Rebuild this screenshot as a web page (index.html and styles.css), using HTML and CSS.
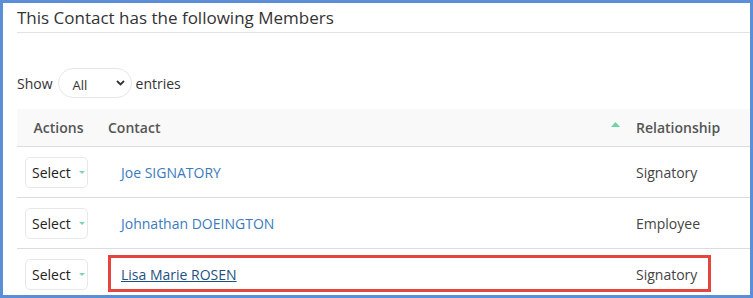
FILE: index.html
```html
<!DOCTYPE html>
<html lang="en">
<head>
  <meta charset="UTF-8" />
  <meta name="viewport" content="width=device-width, initial-scale=1" />
  <title>Contact Members</title>
  <link rel="stylesheet" href="styles.css">
</head>
<body>
  <div class="frame">
    <h2 class="title">This Contact has the following Members</h2>

    <div class="show">
      <span>Show</span>
      <div class="pill">
        <span class="pill-text">All</span>
        <svg class="chevron" width="9" height="6" viewBox="0 0 9 6">
          <path d="M1 1 L4.5 4.5 L8 1" fill="none" stroke="#333" stroke-width="1.8" />
        </svg>
      </div>
      <span>entries</span>
    </div>

    <div class="table-wrap">
      <table>
        <thead>
          <tr>
            <th class="col-actions">Actions</th>
            <th class="col-contact">
              <div class="sortable">
                <span>Contact</span>
                <svg width="9" height="5" viewBox="0 0 9 5"><path d="M0 5 L4.5 0 L9 5 Z" fill="#6fd3a5" /></svg>
              </div>
            </th>
            <th>Relationship</th>
          </tr>
        </thead>
        <tbody>
          <tr>
            <td class="col-actions"><span class="btn">Select <i class="caret"></i></span></td>
            <td><a href="#" class="contact">Joe SIGNATORY</a></td>
            <td>Signatory</td>
          </tr>
          <tr>
            <td class="col-actions"><span class="btn">Select <i class="caret"></i></span></td>
            <td><a href="#" class="contact">Johnathan DOEINGTON</a></td>
            <td>Employee</td>
          </tr>
          <tr>
            <td class="col-actions"><span class="btn">Select <i class="caret"></i></span></td>
            <td><a href="#" class="contact active">Lisa Marie ROSEN</a></td>
            <td>Signatory</td>
          </tr>
        </tbody>
      </table>
      <div class="highlight"></div>
    </div>
  </div>
</body>
</html>
```

FILE: styles.css
```css
body {
  margin: 0;
  font-family: "Open Sans", Arial, sans-serif;
  color: #333;
}
.frame {
  width: 753px;
  height: 298px;
  box-sizing: border-box;
  border: 3px solid #5a8ed6;
  padding-left: 14px;
  overflow: hidden;
  background: #fff;
}
.title {
  margin: 0;
  padding: 2px 0 1px;
  font-size: 17px;
  font-weight: normal;
  line-height: 26px;
  color: #333;
  border-bottom: 1px solid #e2e2e2;
}
.show {
  display: flex;
  align-items: center;
  margin-top: 35px;
  font-size: 14px;
  color: #333;
  height: 30px;
}
.pill {
  display: flex;
  align-items: center;
  justify-content: space-between;
  box-sizing: border-box;
  width: 74px;
  height: 30px;
  margin: 0 4px 0 5px;
  padding: 0 6px 0 14px;
  border: 1px solid #e6e6e6;
  border-radius: 15px;
}
.pill-text {
  font-size: 13px;
  padding-top: 3px;
}
.table-wrap {
  position: relative;
  margin-top: 11px;
  width: 900px;
}
table {
  width: 900px;
  border-collapse: collapse;
  table-layout: fixed;
}
th {
  height: 37px;
  padding: 0 12px;
  background: #f9f9f9;
  color: #555;
  font-size: 14px;
  font-weight: 600;
  text-align: left;
  border-bottom: 1px solid #dcdcdc;
}
td {
  height: 50px;
  padding: 0 12px;
  font-size: 14px;
  color: #444;
  border-bottom: 1px solid #dcdcdc;
}
.col-actions {
  width: 79px;
  padding: 0;
  text-align: center;
}
th.col-actions {
  width: 75px;
  padding-left: 4px;
}
.col-contact {
  width: 512px;
  padding-right: 4px;
}
.sortable {
  display: flex;
  align-items: center;
  justify-content: space-between;
}
.sortable svg {
  margin-top: -6px;
}
.btn {
  display: inline-flex;
  align-items: center;
  box-sizing: border-box;
  width: 63px;
  height: 31px;
  padding-left: 6px;
  gap: 8px;
  border: 1px solid #e8e8e8;
  border-radius: 5px;
  color: #222;
}
.caret {
  width: 0;
  height: 0;
  border-left: 3px solid transparent;
  border-right: 3px solid transparent;
  border-top: 3px solid #7ed6ad;
}
.contact {
  margin-left: 13px;
  color: #3b7bbd;
  text-decoration: none;
}
.contact.active {
  color: #1d5183;
  text-decoration: underline;
}
.highlight {
  position: absolute;
  left: 91px;
  top: 146px;
  width: 603px;
  height: 37px;
  box-sizing: border-box;
  border: 3px solid #e5443f;
}
```
